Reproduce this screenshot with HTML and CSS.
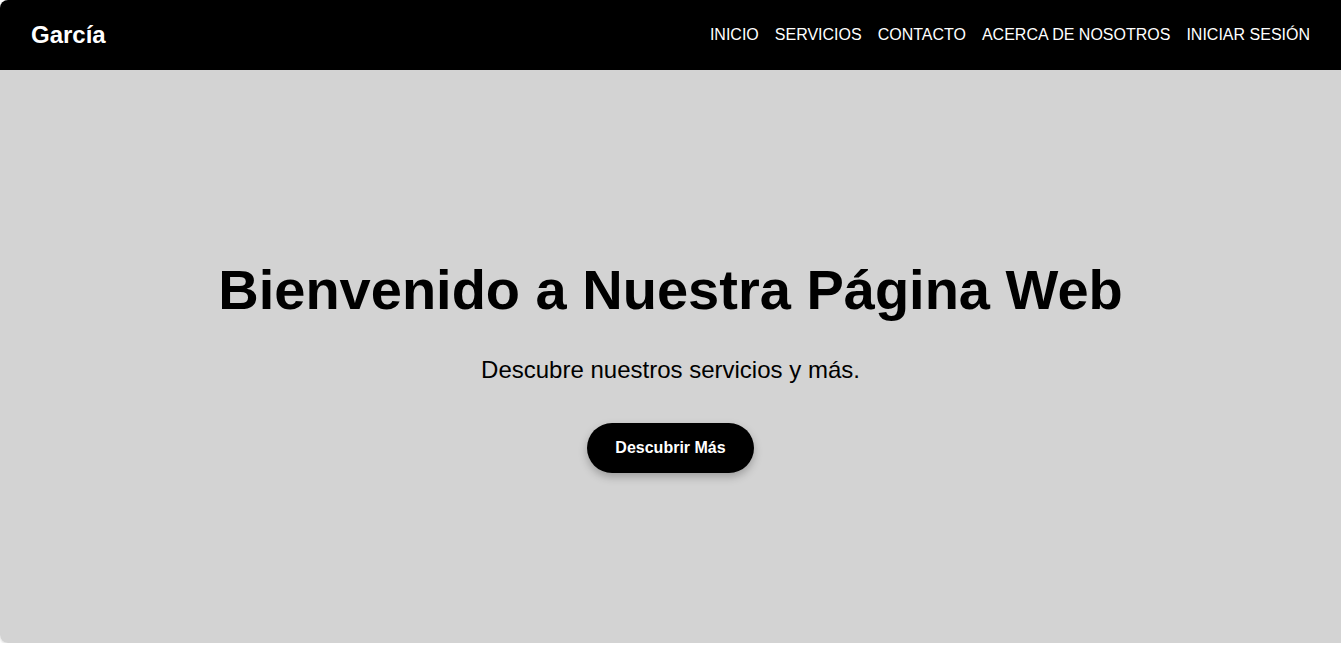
FILE: index.html
```html
<!DOCTYPE html>
<html lang="es">
<head>
<meta charset="utf-8">
<title>García</title>
<link rel="stylesheet" href="styles.css">
</head>
<body>
<div class="page">
  <header class="topbar">
    <div class="logo">García</div>
    <nav class="nav">
      <a href="#">INICIO</a>
      <a href="#">SERVICIOS</a>
      <a href="#">CONTACTO</a>
      <a href="#">ACERCA DE NOSOTROS</a>
      <a href="#">INICIAR SESIÓN</a>
    </nav>
  </header>
  <section class="hero">
    <div class="hero-content">
      <h1 class="hero-title">Bienvenido a Nuestra Página Web</h1>
      <p class="hero-text">Descubre nuestros servicios y más.</p>
      <a class="hero-button" href="#">Descubrir Más</a>
    </div>
  </section>
</div>
</body>
</html>
```

FILE: styles.css
```css
html, body {
  margin: 0;
  padding: 0;
  background: #ffffff;
  font-family: "Liberation Sans", Arial, sans-serif;
}

.page {
  width: 100%;
  height: 643px;
  display: flex;
  flex-direction: column;
  border-radius: 8px 0 0 8px;
  overflow: hidden;
  box-shadow: 0 1px 3px rgba(0, 0, 0, 0.15);
}

.topbar {
  height: 70px;
  flex: 0 0 70px;
  background: #000000;
  display: flex;
  align-items: center;
  justify-content: space-between;
  padding: 0 31px 0 31px;
  box-sizing: border-box;
}

.logo {
  color: #ffffff;
  font-weight: bold;
  font-size: 24px;
  line-height: 28px;
}

.nav {
  display: flex;
  gap: 16px;
}

.nav a {
  color: #ffffff;
  text-decoration: none;
  font-size: 16px;
  line-height: 18px;
}

.hero {
  flex: 1;
  background: #d3d3d3;
  display: flex;
  align-items: center;
  justify-content: center;
}

.hero-content {
  display: flex;
  flex-direction: column;
  align-items: center;
  margin-top: 32px;
  margin-bottom: 0;
}

.hero-title {
  margin: 0 0 34px;
  font-size: 56px;
  line-height: 64px;
  font-weight: bold;
  color: #000000;
}

.hero-text {
  margin: 0 0 39px;
  font-size: 24px;
  line-height: 28px;
  color: #000000;
}

.hero-button {
  display: inline-block;
  background: #000000;
  color: #ffffff;
  text-decoration: none;
  font-weight: bold;
  font-size: 16px;
  line-height: 18px;
  padding: 16px 28px;
  border-radius: 25px;
  box-shadow: 0 4px 8px rgba(0, 0, 0, 0.25);
  margin-bottom: 14px;
}
```
